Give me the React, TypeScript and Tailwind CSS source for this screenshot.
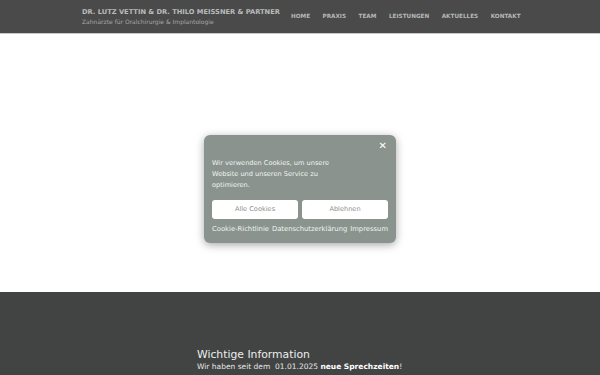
export default function App() {
  const nav = ["HOME", "PRAXIS", "TEAM", "LEISTUNGEN", "AKTUELLES", "KONTAKT"];

  return (
    <div className="relative h-[375px] w-[600px] overflow-hidden bg-white font-['DejaVu_Sans',sans-serif]">
      <header className="flex h-[34px] items-start border-b border-[#c8c8c8] bg-[#4a4a4a] pl-[82px] pt-[8px]">
        <div className="flex flex-col">
          <span className="text-[6.7px] font-bold leading-[9px] text-[#b9bcbb]">
            DR. LUTZ VETTIN &amp; DR. THILO MEISSNER &amp; PARTNER
          </span>
          <span className="text-[6px] leading-[9px] text-[#a4a7a6]">
            Zahnärzte für Oralchirurgie &amp; Implantologie
          </span>
        </div>
        <nav className="ml-[11px] mt-[4px] flex gap-[12.5px]">
          {nav.map((n) => (
            <span key={n} className="text-[5.7px] font-bold leading-[9px] text-[#b4b8b7]">
              {n}
            </span>
          ))}
        </nav>
      </header>

      <main className="h-[258px]" />

      <footer className="h-[83px] bg-[#424443] pl-[197px] pt-[56px]">
        <h2 className="text-[10.8px] leading-[13px] text-[#eceeed]">Wichtige Information</h2>
        <p className="mt-[1px] text-[7.5px] leading-[10px] text-[#e4e6e5]">
          Wir haben seit dem&nbsp; 01.01.2025 <b className="font-bold text-white">neue Sprechzeiten</b>!
        </p>
      </footer>

      <div className="absolute left-[204px] top-[135px] w-[192px] rounded-[6px] bg-[#8a938e] px-[8px] pb-[9px] pt-[6px] shadow-[0_2px_8px_rgba(0,0,0,0.35)]">
        <div className="flex justify-end pr-[1px]">
          <span className="text-[10px] font-bold leading-[10px] text-white">✕</span>
        </div>
        <p className="mt-[7px] w-[125px] text-[6.6px] leading-[11px] text-[#f1f3f2]">
          Wir verwenden Cookies, um unsere Website und unseren Service zu optimieren.
        </p>
        <div className="mt-[9px] flex gap-[4px]">
          <button className="h-[19px] flex-1 rounded-[3px] bg-white text-[6.6px] text-[#8b8f8d]">
            Alle Cookies
          </button>
          <button className="h-[19px] flex-1 rounded-[3px] bg-white text-[6.6px] text-[#8b8f8d]">
            Ablehnen
          </button>
        </div>
        <div className="mt-[5px] flex justify-between text-[6.8px] leading-[10px] text-[#f1f3f2]">
          <span>Cookie-Richtlinie</span>
          <span>Datenschutzerklärung</span>
          <span>Impressum</span>
        </div>
      </div>
    </div>
  );
}
